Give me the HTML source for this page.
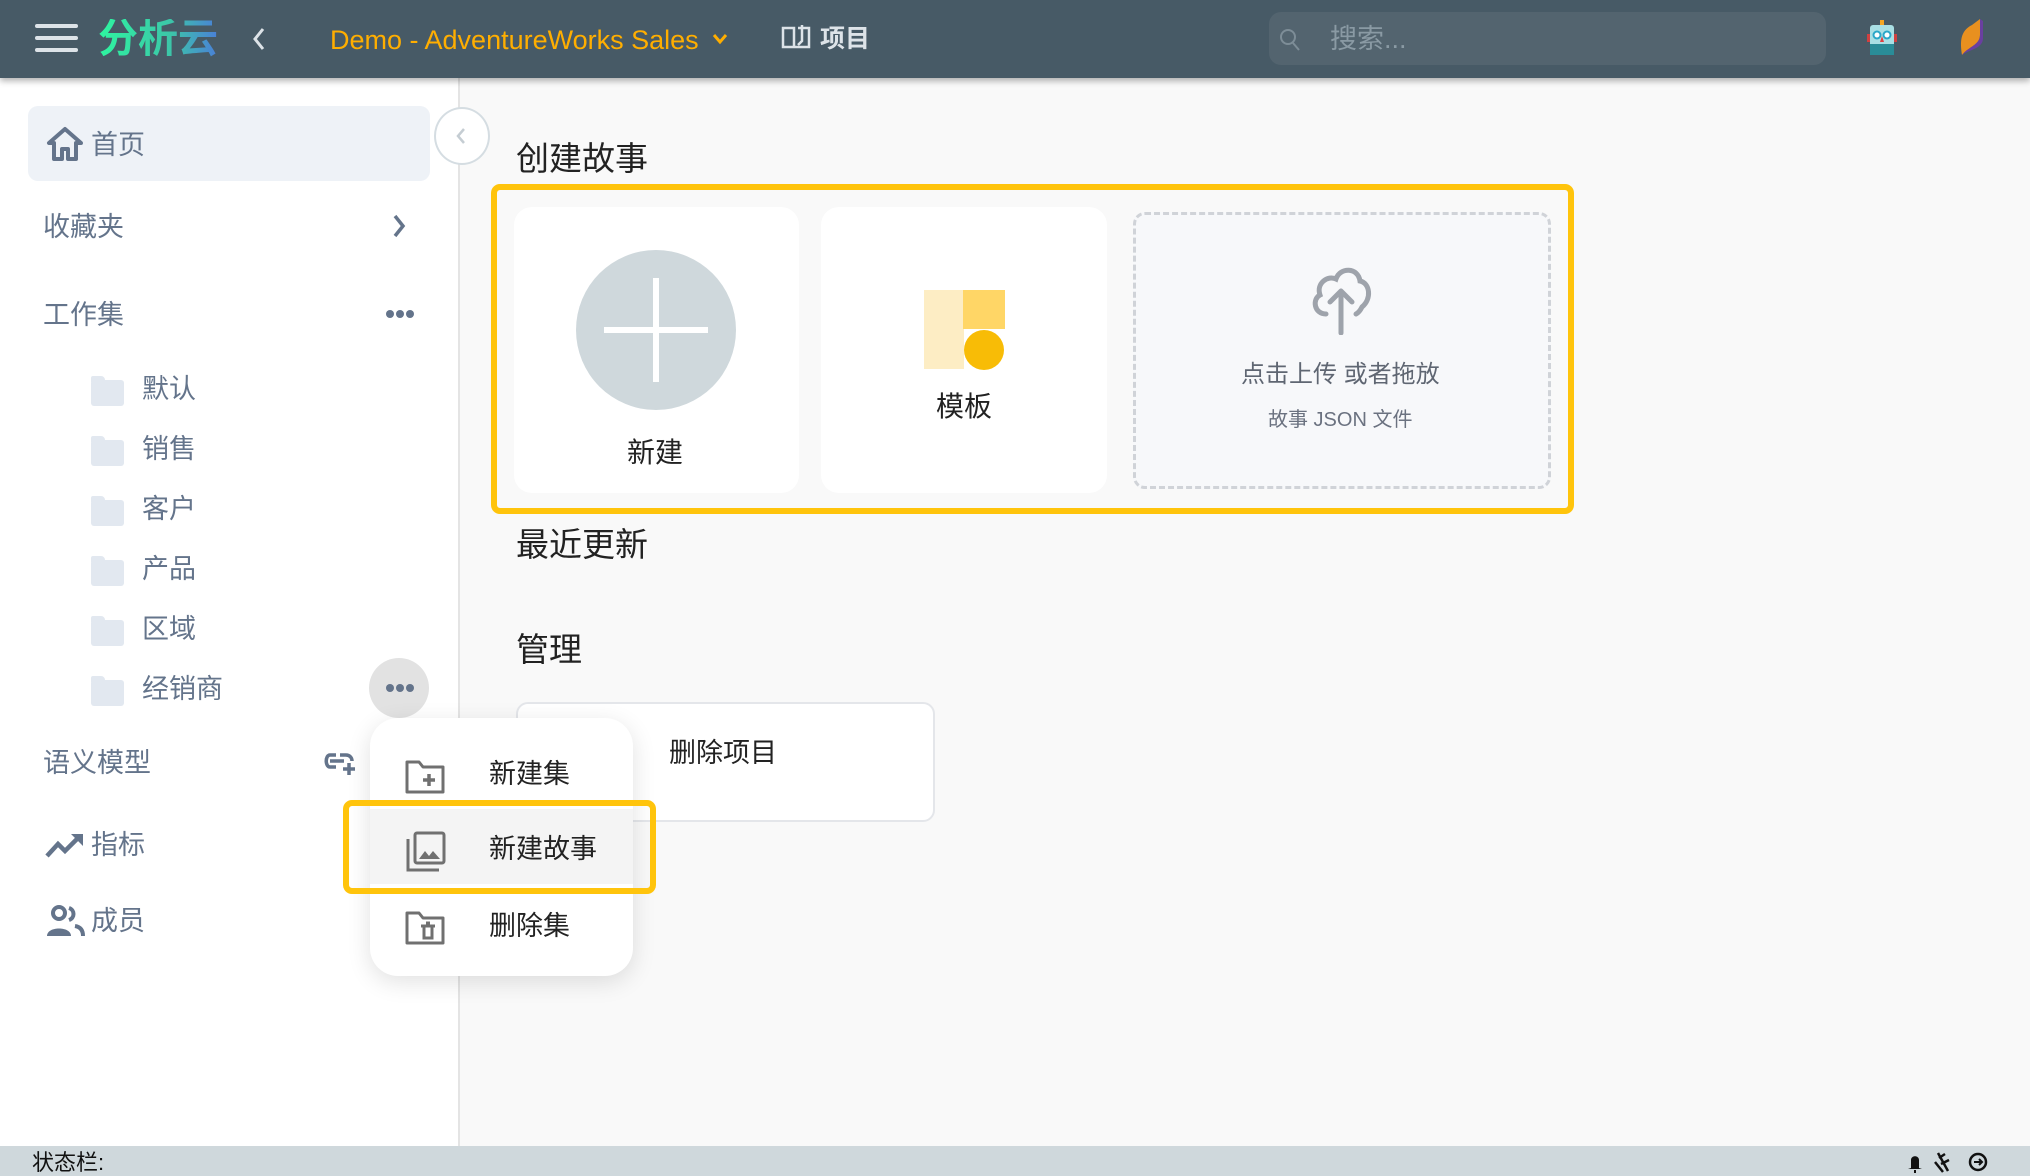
<!DOCTYPE html>
<html><head><meta charset="utf-8">
<style>
*{box-sizing:border-box;margin:0;padding:0}
body{width:2030px;height:1176px;position:relative;overflow:hidden;background:#f9f9f9;font-family:"Liberation Sans","Noto Sans CJK SC",sans-serif}
.a{position:absolute}
.t{position:absolute;white-space:nowrap;line-height:1;margin-top:2px}
.side{color:#64748b;font-size:27px}
.fold{position:absolute;width:33px;height:26px;background:#e2e8f0;border-radius:3px}
.fold:before{content:"";position:absolute;left:0;top:-4px;width:14px;height:6px;background:#e2e8f0;border-radius:2px 4px 0 0}
</style></head><body>
<!-- header -->
<div class="a" style="left:0;top:0;width:2030px;height:78px;background:#475a66;box-shadow:0 3px 6px rgba(0,0,0,.3);z-index:2">
  <div class="a" style="left:35px;top:24px;width:43px;height:4px;background:#dde3e8;border-radius:2px"></div>
  <div class="a" style="left:35px;top:36px;width:43px;height:4px;background:#dde3e8;border-radius:2px"></div>
  <div class="a" style="left:35px;top:48px;width:43px;height:4px;background:#dde3e8;border-radius:2px"></div>
  <div class="t" style="left:98px;top:17px;font-size:40px;font-weight:bold;background:linear-gradient(90deg,#2ef5a0,#3cc6a8 60%,#4a7fd8);-webkit-background-clip:text;color:transparent">分析云</div>
  <svg class="a" style="left:250px;top:26px" width="18" height="26"><path d="M13 3 L5 13 L13 23" stroke="#dde3e8" stroke-width="3" fill="none"/></svg>
  <div class="t" style="left:330px;top:25px;font-size:27px;color:#ffae00">Demo - AdventureWorks Sales</div>
  <svg class="a" style="left:712px;top:33px" width="16" height="12"><path d="M2 2 L8 9 L14 2" stroke="#ffae00" stroke-width="3" fill="none"/></svg>
  <svg class="a" style="left:780px;top:23px" width="32" height="28"><path d="M3 5 L3 24 L14 24 L14 5 Z M14 24 L29 24 L29 5 L18 5 M22 2 L22 18 L18 22" stroke="#dde3e8" stroke-width="2.5" fill="none"/></svg>
  <div class="t" style="left:820px;top:25px;font-size:25px;font-weight:bold;color:#dde3e8">项目</div>
  <div class="a" style="left:1269px;top:12px;width:557px;height:53px;background:#53646f;border-radius:12px"></div>
  <svg class="a" style="left:1278px;top:27px" width="24" height="26"><circle cx="10" cy="10" r="7" stroke="#7d8d97" stroke-width="2" fill="none"/><path d="M15 16 L21 23" stroke="#7d8d97" stroke-width="2"/></svg>
  <div class="t" style="left:1330px;top:24px;font-size:27px;color:#8a9aa4">搜索...</div>
  <svg class="a" style="left:1865px;top:20px" width="34" height="36"><rect x="15" y="0" width="4" height="5" fill="#f5a623"/><rect x="5" y="5" width="24" height="30" rx="3" fill="#a9dfe4"/><rect x="5" y="24" width="24" height="11" fill="#2a8c98"/><circle cx="12" cy="15" r="3.5" fill="#fff" stroke="#2aa7c8" stroke-width="2"/><circle cx="22" cy="15" r="3.5" fill="#fff" stroke="#2aa7c8" stroke-width="2"/><path d="M17 16 L15 22 L19 22Z" fill="#e04040"/><rect x="2" y="14" width="3" height="8" fill="#d04040"/><rect x="29" y="14" width="3" height="8" fill="#d04040"/></svg>
  <svg class="a" style="left:1958px;top:17px" width="30" height="40"><path d="M4 38 C2 25 2 14 14 8 L22 2 L22 18 C22 28 10 30 4 38Z" fill="#e8901f"/><path d="M4 38 C10 30 22 28 22 18 L22 2 L25 4 L25 22 C24 32 12 32 4 38Z" fill="#6a3fa0"/></svg>
</div>
<!-- sidebar -->
<div class="a" style="left:0;top:78px;width:460px;height:1068px;background:#fff;border-right:2px solid #e4e4e4"></div>
<div class="a" style="left:28px;top:106px;width:402px;height:75px;background:#eef2f7;border-radius:10px"></div>
<svg class="a" style="left:46px;top:125px" width="38" height="38"><path d="M19 4 L3 18 L8 18 L8 34 L16 34 L16 24 L22 24 L22 34 L30 34 L30 18 L35 18 Z" fill="none" stroke="#64748b" stroke-width="4" stroke-linejoin="round"/></svg>
<div class="t side" style="left:91px;top:130px">首页</div>
<div class="a" style="left:434px;top:107px;width:56px;height:58px;border-radius:50%;background:#fff;border:2px solid #d5dde2;z-index:1"></div>
<svg class="a" style="left:453px;top:126px;z-index:1" width="16" height="20"><path d="M11 3 L5 10 L11 17" stroke="#c5cdd3" stroke-width="2.5" fill="none"/></svg>
<div class="t side" style="left:43px;top:212px">收藏夹</div>
<svg class="a" style="left:390px;top:213px" width="18" height="26"><path d="M5 3 L13 13 L5 23" stroke="#64748b" stroke-width="3.5" fill="none"/></svg>
<div class="t side" style="left:43px;top:300px">工作集</div>
<div class="a" style="left:386px;top:310px;width:8px;height:8px;border-radius:50%;background:#64748b;box-shadow:10px 0 #64748b,20px 0 #64748b"></div>
<div class="fold" style="left:91px;top:380px"></div><div class="t side" style="left:142px;top:374px">默认</div>
<div class="fold" style="left:91px;top:440px"></div><div class="t side" style="left:142px;top:434px">销售</div>
<div class="fold" style="left:91px;top:500px"></div><div class="t side" style="left:142px;top:494px">客户</div>
<div class="fold" style="left:91px;top:560px"></div><div class="t side" style="left:142px;top:554px">产品</div>
<div class="fold" style="left:91px;top:620px"></div><div class="t side" style="left:142px;top:614px">区域</div>
<div class="fold" style="left:91px;top:680px"></div><div class="t side" style="left:142px;top:674px">经销商</div>
<div class="a" style="left:369px;top:658px;width:60px;height:60px;border-radius:50%;background:#e2e2e2"></div>
<div class="a" style="left:386px;top:684px;width:8px;height:8px;border-radius:50%;background:#64748b;box-shadow:10px 0 #64748b,20px 0 #64748b"></div>
<div class="t side" style="left:43px;top:748px">语义模型</div>
<svg class="a" style="left:322px;top:749px" width="36" height="28"><path d="M14 6 L8 6 C3 6 3 18 8 18 L14 18 M8 12 L22 12 M18 6 L24 6 C28 6 30 9 30 12" stroke="#64748b" stroke-width="3.5" fill="none"/><path d="M27 14 L27 26 M21 20 L33 20" stroke="#64748b" stroke-width="3.5"/></svg>
<svg class="a" style="left:45px;top:830px" width="42" height="30"><path d="M2 26 L13 14 L20 21 L35 6" stroke="#64748b" stroke-width="4.5" fill="none"/><path d="M26 4 L38 4 L38 16 Z" fill="#64748b"/></svg>
<div class="t side" style="left:91px;top:830px">指标</div>
<svg class="a" style="left:45px;top:904px" width="42" height="34"><circle cx="14" cy="9" r="6" stroke="#64748b" stroke-width="4" fill="none"/><path d="M2 32 C2 22 26 22 26 32 Z" fill="#64748b"/><path d="M24 4 C30 6 30 14 24 16 M30 22 C36 23 38 27 38 32" stroke="#64748b" stroke-width="4" fill="none"/></svg>
<div class="t side" style="left:91px;top:906px">成员</div>
<!-- main -->
<div class="t" style="left:516px;top:140px;font-size:33px;color:#222">创建故事</div>
<div class="a" style="left:491px;top:184px;width:1083px;height:330px;border:6px solid #ffc40c;border-radius:9px"></div>
<div class="a" style="left:514px;top:207px;width:285px;height:286px;background:#fff;border-radius:18px"></div>
<div class="a" style="left:576px;top:250px;width:160px;height:160px;border-radius:50%;background:#cfd8dc"></div>
<div class="a" style="left:604px;top:327px;width:104px;height:6px;background:#fff"></div>
<div class="a" style="left:653px;top:278px;width:6px;height:104px;background:#fff"></div>
<div class="t" style="left:627px;top:437px;font-size:28px;color:#222">新建</div>
<div class="a" style="left:821px;top:207px;width:286px;height:286px;background:#fff;border-radius:18px"></div>
<div class="a" style="left:924px;top:290px;width:40px;height:79px;background:#fdedc4"></div>
<div class="a" style="left:963px;top:290px;width:42px;height:39px;background:#ffd666"></div>
<div class="a" style="left:964px;top:330px;width:40px;height:40px;border-radius:50%;background:#f8bc06"></div>
<div class="t" style="left:936px;top:391px;font-size:28px;color:#222">模板</div>
<div class="a" style="left:1133px;top:212px;width:418px;height:277px;background:#f7f8fa;border:3px dashed #d0d3d8;border-radius:12px"></div>
<svg class="a" style="left:1310px;top:265px" width="62" height="70"><path d="M16 49 C4 49 2 34 10 30 C6 18 18 10 26 14 C30 2 48 2 50 16 C60 18 62 34 52 42 C50 46 48 48 46 49" stroke="#9ea3ab" stroke-width="5" fill="none" stroke-linecap="round"/><path d="M31 68 L31 26 M20 37 L31 26 L42 37" stroke="#9ea3ab" stroke-width="5" fill="none" stroke-linecap="round" stroke-linejoin="round"/></svg>
<div class="t" style="left:1241px;top:361px;font-size:24px;color:#5f6672">点击上传 或者拖放</div>
<div class="t" style="left:1268px;top:408px;font-size:20px;color:#6b7280">故事 JSON 文件</div>
<div class="t" style="left:516px;top:526px;font-size:33px;color:#222">最近更新</div>
<div class="t" style="left:516px;top:631px;font-size:33px;color:#222">管理</div>
<div class="a" style="left:516px;top:702px;width:419px;height:120px;background:#fff;border:2px solid #e4e6ea;border-radius:12px"></div>
<div class="t" style="left:669px;top:738px;font-size:27px;color:#222">删除项目</div>
<!-- menu -->
<div class="a" style="left:370px;top:718px;width:263px;height:258px;background:#fff;border-radius:28px;box-shadow:0 6px 24px rgba(0,0,0,.12)"></div>
<div class="a" style="left:370px;top:809px;width:263px;height:75px;background:#f4f4f4"></div>
<svg class="a" style="left:405px;top:758px" width="42" height="36"><path d="M2 4 L14 4 L18 9 L38 9 L38 34 L2 34 Z" stroke="#707070" stroke-width="3" fill="none" stroke-linejoin="round"/><path d="M24 16 L24 28 M18 22 L30 22" stroke="#707070" stroke-width="3.5"/></svg>
<div class="t" style="left:489px;top:759px;font-size:27px;color:#222">新建集</div>
<svg class="a" style="left:405px;top:831px" width="42" height="42"><path d="M3 8 L3 39 L34 39" stroke="#707070" stroke-width="3" fill="none"/><rect x="10" y="2" width="29" height="30" rx="2" stroke="#707070" stroke-width="3" fill="none"/><path d="M14 28 L20 20 L24 25 L28 20 L35 28 Z" fill="#707070"/></svg>
<div class="t" style="left:489px;top:834px;font-size:27px;color:#222">新建故事</div>
<svg class="a" style="left:405px;top:909px" width="42" height="36"><path d="M2 4 L14 4 L18 9 L38 9 L38 34 L2 34 Z" stroke="#707070" stroke-width="3" fill="none" stroke-linejoin="round"/><path d="M16 17 L30 17 M19 17 L19 29 L27 29 L27 17 M21 14 L25 14" stroke="#707070" stroke-width="3" fill="none"/></svg>
<div class="t" style="left:489px;top:911px;font-size:27px;color:#222">删除集</div>
<div class="a" style="left:343px;top:800px;width:313px;height:94px;border:6px solid #ffc40c;border-radius:9px"></div>
<!-- status bar -->
<div class="a" style="left:0;top:1146px;width:2030px;height:30px;background:#cfd8dc"></div>
<div class="t" style="left:32px;top:1150px;font-size:22px;color:#111">状态栏:</div>
<svg class="a" style="left:1905px;top:1150px" width="90" height="24"><path d="M6 18 L6 10 C6 5 14 5 14 10 L14 18 L17 19 L3 19 Z M9 20 L11 20 L11 23 L9 23Z" fill="#111"/><path d="M33 3 L43 21 M34 8 L40 4 M36 14 L44 10 M30 12 L38 22" stroke="#111" stroke-width="2.5"/><circle cx="73" cy="12" r="8" stroke="#111" stroke-width="2.5" fill="none"/><path d="M69 12 L77 12 M74 9 L77 12 L74 15" stroke="#111" stroke-width="2" fill="none"/></svg>
</body></html>
